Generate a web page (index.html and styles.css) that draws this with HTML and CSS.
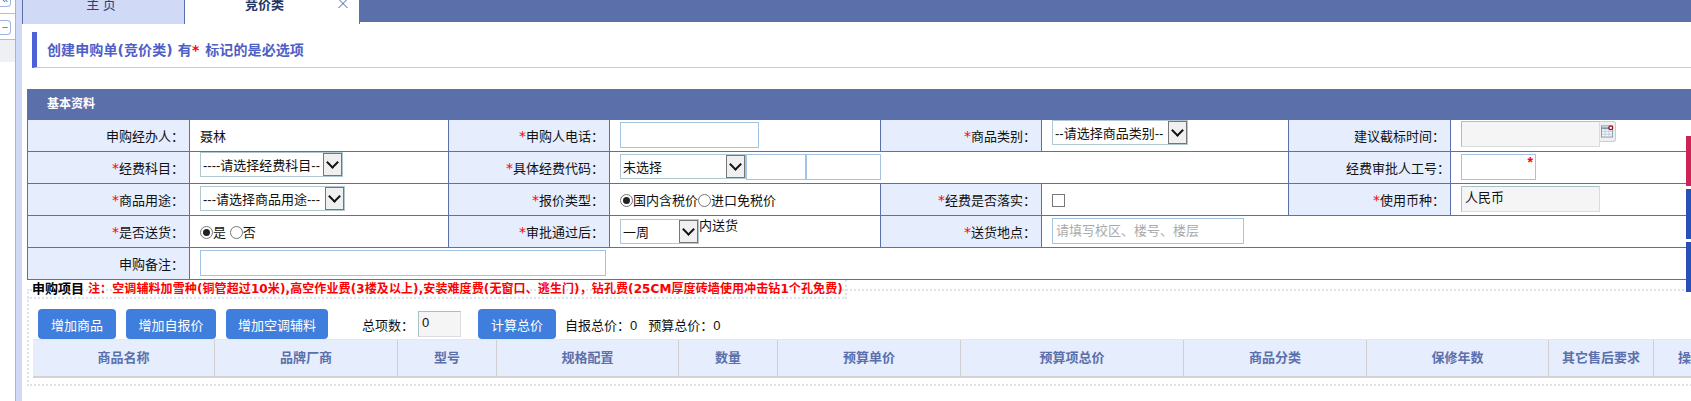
FILE: index.html
```html
<!DOCTYPE html>
<html lang="zh-CN">
<head>
<meta charset="utf-8">
<title>创建申购单</title>
<link rel="stylesheet" href="styles.css">
</head>
<body>
<div class="shell">
  <aside class="side">
    <div class="side-top"><span class="side-btn side-btn-cut">«</span></div>
    <div class="side-mid"><span class="side-btn">−</span></div>
    <div class="side-row"></div>
  </aside>
  <div class="gutter"></div>
  <main class="main">
    <nav class="tabs">
      <div class="tab">主 页</div>
      <div class="tab tab-on">竞价类<svg class="tab-x" width="10" height="8" viewBox="0 0 10 8"><path d="M.5 -1l9 9M9.5 -1l-9 9" stroke="#4a5f94" fill="none"/></svg></div>
      <div class="tabs-fill"></div>
    </nav>
    <div class="content">
      <h1 class="title">创建申购单(竞价类) 有<span class="star">*</span> 标记的是必选项</h1>
      <h2 class="bar">基本资料</h2>
      <table class="form">
        <colgroup>
          <col class="c1"><col class="c2"><col class="c3"><col class="c4"><col class="c5"><col class="c6"><col class="c7"><col class="c8">
        </colgroup>
        <tr>
          <th>申购经办人：</th>
          <td>聂林</td>
          <th><i>*</i>申购人电话：</th>
          <td><input class="in w139" type="text"></td>
          <th><i>*</i>商品类别：</th>
          <td><span class="sel w136 lift">--请选择商品类别--<b class="arrow"></b></span></td>
          <th>建议截标时间：</th>
          <td class="date"><span class="in ro w139"></span><span class="cal"><svg width="14" height="14" viewBox="0 0 14 14"><rect x=".5" y="1.5" width="12" height="12" fill="#f4f6fa" stroke="#7f93b2"/><path d="M.5 4h12" stroke="#7f93b2" stroke-width="2"/><path d="M4.5 5v8M8.5 5v8M1 7.5h11M1 10.5h11" stroke="#c3cbd8" fill="none"/><circle cx="10.5" cy="3.5" r="2" fill="#fff" stroke="#9a1616" stroke-width="1.4"/></svg></span></td>
        </tr>
        <tr>
          <th><i>*</i>经费科目：</th>
          <td><span class="sel w143 lift">----请选择经费科目--<b class="arrow"></b></span></td>
          <th><i>*</i>具体经费代码：</th>
          <td colspan="3" class="codes"><span class="sel w126">未选择<b class="arrow"></b></span><input class="in w59" type="text"><input class="in w75" type="text"></td>
          <th class="wide">经费审批人工号：</th>
          <td><span class="in w75 req">*</span></td>
        </tr>
        <tr>
          <th><i>*</i>商品用途：</th>
          <td><span class="sel w145">---请选择商品用途---<b class="arrow"></b></span></td>
          <th><i>*</i>报价类型：</th>
          <td><span class="radio on"></span>国内含税价<span class="radio"></span>进口免税价</td>
          <th><i>*</i>经费是否落实：</th>
          <td><span class="check"></span></td>
          <th><i>*</i>使用币种：</th>
          <td><span class="in ro w139">人民币</span></td>
        </tr>
        <tr>
          <th><i>*</i>是否送货：</th>
          <td><span class="radio on"></span>是 <span class="radio"></span>否</td>
          <th><i>*</i>审批通过后：</th>
          <td><span class="deliver"><span class="sel w79">一周<b class="arrow"></b></span><span class="deliver-t">内送货</span></span></td>
          <th><i>*</i>送货地点：</th>
          <td colspan="3"><input class="in w192" type="text" placeholder="请填写校区、楼号、楼层"></td>
        </tr>
        <tr>
          <th>申购备注：</th>
          <td colspan="7"><input class="in w406" type="text"></td>
        </tr>
      </table>
      <section class="items">
        <div class="legend"><span class="legend-name">申购项目</span><span class="legend-note">注：空调辅料加雪种(铜管超过10米),高空作业费(3楼及以上),安装难度费(无窗口、逃生门)，钻孔费(25CM厚度砖墙使用冲击钻1个孔免费)</span></div>
        <div class="tools">
          <button class="btn b78" type="button">增加商品</button>
          <button class="btn b90" type="button">增加自报价</button>
          <button class="btn b102" type="button">增加空调辅料</button>
          <span class="count">总项数：</span>
          <span class="in ro num">0</span>
          <button class="btn b78 calc" type="button">计算总价</button>
          <span class="sum">自报总价：0</span>
          <span class="sum sum2">预算总价：0</span>
        </div>
        <div class="thead">
          <div class="h1">商品名称</div><div class="h2">品牌厂商</div><div class="h3">型号</div><div class="h4">规格配置</div><div class="h5">数量</div><div class="h6">预算单价</div><div class="h7">预算项总价</div><div class="h8">商品分类</div><div class="h9">保修年数</div><div class="h10">其它售后要求</div><div class="h11">操作</div>
        </div>
      </section>
    </div>
  </main>
  <div class="float f1"></div>
  <div class="float f2"></div>
  <div class="float f3"></div>
</div>
</body>
</html>
```
FILE: styles.css
```css
*{box-sizing:border-box}
html,body{margin:0;padding:0;height:401px;overflow:hidden;background:#fff}
body,input,button{font-family:"Liberation Sans","Noto Sans CJK SC",sans-serif;font-size:13px;color:#111}
.shell{position:relative;display:flex;width:1691px;height:401px;overflow:hidden}
.side{width:16px;flex:none;border-right:1px solid #9db3ea}
.side-top{height:14px;border-bottom:1px solid #a9bdf0;position:relative;overflow:hidden}
.side-mid{height:26px;border-bottom:1px solid #a9bdf0;padding-top:6px}
.side-row{height:22px;background:#eef0f4}
.side-btn{display:block;width:11px;height:15px;border:1px solid #9db3ea;border-left:0;border-radius:0 4px 4px 0;color:#5b70ab;font-size:11px;line-height:12px;text-align:center}
.side-btn-cut{margin-top:-8px}
.gutter{width:6px;flex:none;background:#d0d9f6}
.main{flex:1;min-width:0}
.tabs{display:flex;height:24px;align-items:flex-start}
.tab{width:163px;height:24px;background:#d0d9f6;border-left:1px solid #5b70ab;border-right:1px solid #5b70ab;text-align:center;line-height:9px;color:#24427e;position:relative;padding-right:5px}
.tab-on{width:175px;background:#fff;color:#1e3566;border-left:0;font-weight:bold;padding-right:15px}
.tab-x{position:absolute;left:153px;top:0}
.tabs-fill{flex:1;height:22px;background:#5b70ab}
.content{padding-top:8px;margin-left:5px}
.title{margin:0 0 21px 5px;height:36px;border-left:5px solid #4c60d8;border-bottom:1px solid #ccc;padding:6px 0 0 10px;font-family:"DejaVu Sans","Noto Sans CJK SC",sans-serif;font-size:14px;line-height:24px;font-weight:bold;color:#4c60c8;letter-spacing:.1px}
.star{color:#f00;margin-right:1px}
.bar{margin:0;height:30px;background:#5b70ab;color:#fff;font-size:12px;line-height:31px;padding-left:20px}
.form{border-collapse:collapse;table-layout:fixed;width:1680px;margin:0}
.c1{width:162px}.c2{width:259px}.c3{width:161px}.c4{width:271px}.c5{width:161px}.c6{width:247px}.c7{width:162px}.c8{width:257px}
.form th,.form td{border:1px solid #5b70ab;height:32px;padding:0;vertical-align:middle;font-weight:normal}
.form th{background:#e6edfd;text-align:right;padding-right:5px}
.form th.wide{padding-right:0}
.form td{padding-left:10px}
.form i{font-style:normal;color:#f00;font-family:"DejaVu Sans",sans-serif;font-size:14px;line-height:1}
.in{display:inline-block;height:26px;margin-bottom:2px;border:1px solid #a3c3e3;border-radius:0;background:#fff;vertical-align:middle;padding:0 3px;line-height:22px;outline:0}
.in::placeholder{color:#aaa}
.ro{background:#f5f5f5;border-color:#a9c0c8 #d8dcdc #d8dcdc #a9c0c8}
.w139{width:139px}.w59{width:60px}.w75{width:75px}.w192{width:192px}.w406{width:406px}
.req{color:#f00;text-align:right;line-height:14px;font-size:14px;font-weight:bold;padding-right:2px}
.sel{display:inline-flex;align-items:center;height:25px;margin-bottom:2px;border:1px solid #afc8d2;background:#fff;padding-left:2px;position:relative;vertical-align:middle;white-space:nowrap;overflow:hidden}
.sel.lift{margin-bottom:6px}
.arrow{position:absolute;right:0;top:0;bottom:0;width:19px;background:#f0f0f0;border:1px solid #767676}
.arrow::after{content:"";position:absolute;left:4px;top:4px;width:7px;height:7px;border:solid #111;border-width:0 2px 2px 0;transform:rotate(45deg)}
.w136{width:136px}.w143{width:143px}.w145{width:145px}.w126{width:126px}.w79{width:79px}
.codes{white-space:nowrap;font-size:0}
.codes .sel{font-size:13px}
.date{white-space:nowrap}
.date .in{margin-bottom:3px}
.cal{display:inline-flex;width:16px;height:21px;border:1px solid #c4ccd8;border-left:0;background:#f0f0f0;vertical-align:top;margin-top:0;border-radius:0 3px 3px 0;padding:2px 1px}
.radio{display:inline-block;width:13px;height:13px;border:1px solid #777;border-radius:50%;vertical-align:-2px;position:relative}
.radio.on::after{content:"";position:absolute;left:2px;top:2px;width:7px;height:7px;border-radius:50%;background:#222}
.check{display:inline-block;width:13px;height:13px;border:1px solid #777;vertical-align:middle}
.deliver{display:inline-flex;align-items:flex-start}
.deliver .sel{margin-bottom:0}
.deliver-t{margin-top:-1px;line-height:16px}
.items{position:relative;height:97px;width:1680px;border-top:2px dotted #dde3ea;border-bottom:2px dotted #dde3ea;border-left:2px dotted #dde3ea;margin-top:9px}
.legend{position:absolute;left:-2px;top:-11px;height:19px;width:820px;border-bottom:2px dotted #dde3ea;border-right:2px dotted #dde3ea;white-space:nowrap;padding-left:5px;line-height:18px}
.legend-name{font-weight:bold;color:#000;font-size:13px}
.legend-note{font-family:"DejaVu Sans","Noto Sans CJK SC",sans-serif;margin-left:4px;font-weight:bold;color:#f00;font-size:12px;letter-spacing:.1px}
.tools{display:flex;align-items:center;height:30px;margin-top:18px;padding-left:9px}
.tools .in{margin-bottom:0}
.btn{height:30px;border:0;border-radius:4px;background:#3f7edc;color:#fff;padding:0;font-size:13px}
.b78{width:78px}.b90{width:90px;margin-left:10px}.b102{width:102px;margin-left:10px}
.count{margin-left:34px}
.num{width:43px;margin-left:4px}
.calc{margin-left:17px}
.sum{margin-left:9px}
.sum2{margin-left:11px}
.thead{display:flex;height:39px;margin-left:4px;background:#e6edfd;border-top:1px solid #e8e8e8;border-bottom:2px solid #d2d2d2;color:#5b70ab;font-weight:bold;white-space:nowrap}
.thead div{text-align:center;line-height:36px;border-right:1px solid #d0d0d0;flex:none;overflow:hidden}
.h1{width:182px}.h2{width:183px}.h3{width:99px}.h4{width:182px}.h5{width:99px}.h6{width:183px}.h7{width:223px}.h8{width:183px}.h9{width:182px}.h10{width:105px}.h11{width:74px;border-right:0 !important}
.float{position:absolute;left:1686px;width:5px;height:50px}
.f1{top:136px;background:#cc2255}
.f2{top:189px;background:#2a4fb8}
.f3{top:242px;background:#2a4fb8}
```
